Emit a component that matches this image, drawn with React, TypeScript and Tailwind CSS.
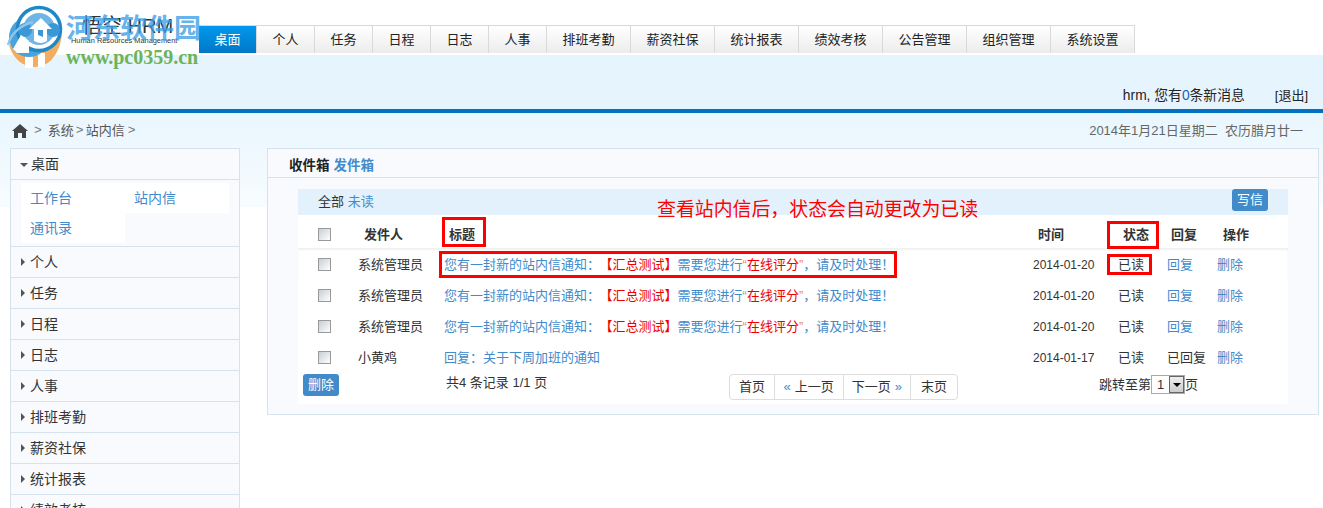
import { Fragment } from "react";

const tabs: [string, string][] = [
  ["桌面", "w-[58px]"], ["个人", "w-[58px]"], ["任务", "w-[58px]"], ["日程", "w-[58px]"], ["日志", "w-[58px]"], ["人事", "w-[58px]"],
  ["排班考勤", "w-[84px]"], ["薪资社保", "w-[84px]"], ["统计报表", "w-[84px]"], ["绩效考核", "w-[84px]"], ["公告管理", "w-[84px]"], ["组织管理", "w-[84px]"], ["系统设置", "w-[84px]"],
];

const menu = ["个人", "任务", "日程", "日志", "人事", "排班考勤", "薪资社保", "统计报表", "绩效考核"];

const rows = [
  { from: "系统管理员", date: "2014-01-20", reply: "回复" },
  { from: "系统管理员", date: "2014-01-20", reply: "回复" },
  { from: "系统管理员", date: "2014-01-20", reply: "回复" },
  { from: "小黄鸡", date: "2014-01-17", reply: "已回复" },
];

const cols = "grid grid-cols-[61px_85px_589px_85px_49px_50px_1fr] items-center";

function Check() {
  return <span className="block h-[13px] w-[13px] border border-[#999] bg-gradient-to-br from-[#c8ced4] to-white" />;
}

function Logo() {
  return (
    <svg width="60" height="64" viewBox="0 0 60 64" className="absolute left-[5px] top-[5px]">
      <path d="M4 40 C8 54 18 62 30 62 C44 62 54 50 57 30 L30 40 Z" fill="#f4ad5f" />
      <rect x="20" y="50" width="8" height="13" fill="#fff" />
      <rect x="33" y="48" width="7" height="14" fill="#fff" />
      <circle cx="24" cy="32" r="20" fill="#4aa3dc" />
      <circle cx="34" cy="24" r="22" fill="#fff" />
      <circle cx="34" cy="24" r="21.5" fill="none" stroke="#1e88c8" strokeWidth="3.5" />
      <circle cx="34" cy="24" r="16" fill="#6db5e4" />
      <circle cx="20" cy="25" r="7" fill="#3b97d6" />
      <circle cx="48" cy="25" r="7" fill="#3b97d6" />
      <path d="M29 36 L29 24 L24 24 L36 13 L47 24 L42 24 L42 36 Q36 40 29 36 Z" fill="#fff" />
      <path d="M33 30 L33 25 L38 25 L38 32 Z" fill="#3b97d6" />
      <path d="M3 40 C6 28 16 20 28 17" fill="none" stroke="#8cc6ec" strokeWidth="2.5" />
      <path d="M8 44 L16 30 L24 36 L24 48 L12 48 Z" fill="#fff" />
    </svg>
  );
}

function Header() {
  return (
    <header>
      <div className="flex h-[55px] items-start bg-white pl-[199px] pt-[25px]">
        {tabs.map(([name, width], i) => (
          <div
            key={name}
            className={`${width} flex h-[28px] items-center justify-center border-r border-t border-[#d9d9d9] text-[13px] ${
              i === 0 ? "border-[#0077c0] bg-gradient-to-b from-[#0099ee] to-[#0077c6] text-white" : "bg-gradient-to-b from-white to-[#ececec] text-[#222]"
            }`}
          >
            {name}
          </div>
        ))}
      </div>
      <div className="flex h-[54px] items-end justify-end bg-[#e6f4fe] pb-[4px] pr-[15px] leading-[18px] text-[#222]">
        <span className="text-[13.8px]">hrm, 您有<span className="text-[#1b5fb0]">0</span>条新消息</span>
        <span className="ml-[30px] text-[13px]">[退出]</span>
      </div>
      <div className="h-[4px] bg-[#0070c0]" />
    </header>
  );
}

function Sidebar() {
  return (
    <aside className="w-[230px] shrink-0 border border-[#d5e3ef] bg-[#f8fafe] text-[14px] text-[#333]">
      <div className="flex h-[31px] items-center border-b border-[#d5e3ef] pl-[9px]">
        <span className="mr-[3px] mt-[1px] h-0 w-0 border-x-[4px] border-t-[4px] border-x-transparent border-t-[#555]" />
        桌面
      </div>
      <div className="grid h-[67px] grid-cols-[104px_104px] content-start border-b border-[#d5e3ef] pl-[10px] pt-[3px] text-[#428bca]">
        <div className="flex h-[30px] items-center bg-white pl-[9px]">工作台</div>
        <div className="flex h-[30px] items-center bg-white pl-[9px]">站内信</div>
        <div className="flex h-[30px] items-center bg-white pl-[9px]">通讯录</div>
      </div>
      {menu.map((m) => (
        <div key={m} className="flex h-[31px] items-center border-b border-[#d5e3ef] pl-[10px]">
          <span className="mr-[5px] h-0 w-0 border-y-[4px] border-l-[4px] border-y-transparent border-l-[#555]" />
          {m}
        </div>
      ))}
    </aside>
  );
}

function Subject() {
  return (
    <span className="text-[13px] text-[#428bca]">
      您有一封新的站内信通知：<span className="ml-[6px] text-[#e00]">【汇总测试】</span>需要您进行<span className="text-[#f08a3c]">“</span><span className="text-[#e00]">在线评分</span><span className="text-[#f08a3c]">”</span>，请及时处理！
    </span>
  );
}

function Pager() {
  const cells = [
    ["首页", "w-[45px]"],
    ["上一页", "w-[69px]"],
    ["下一页", "w-[68px]"],
    ["末页", "w-[46px]"],
  ];
  return (
    <div className="flex h-[26px] w-[229px] rounded-[4px] border border-[#ddd] bg-white text-[13px] text-[#333]">
      {cells.map(([t, w], i) => (
        <div key={t} className={`${w} flex items-center justify-center ${i < 3 ? "border-r border-[#ddd]" : ""}`}>
          {i === 1 && <span className="mr-[4px] text-[#428bca]">«</span>}
          {t}
          {i === 2 && <span className="ml-[4px] text-[#428bca]">»</span>}
        </div>
      ))}
    </div>
  );
}

function Inbox() {
  return (
    <main className="ml-[27px] h-[267px] w-[1052px] border border-[#d5e3ef] bg-[#f8fafe]">
      <div className="flex h-[29px] items-center gap-[4px] border-b border-[#d5e3ef] pl-[21px] pt-[6px] text-[13.5px] font-bold text-[#222]">
        收件箱 <span className="text-[#428bca]">发件箱</span>
      </div>
      <div className="mx-[30px] mt-[11px] h-[215px] w-[990px] bg-white">
        <div className="flex h-[26px] items-start justify-between bg-[#e3f1fd] pl-[20px] pr-[20px] text-[13px] text-[#333]">
          <span className="pt-[4px] leading-[18px]">全部 <span className="text-[#428bca]">未读</span></span>
          <span className="flex h-[22px] w-[36px] items-center justify-center rounded-[3px] bg-[#428bca] text-[13px] text-white">写信</span>
        </div>
        <div className={`${cols} h-[33px] pt-[6px] text-[13px] font-bold text-[#333]`}>
          <span className="pl-[20px]"><Check /></span>
          <span className="pl-[5px]">发件人</span>
          <span className="pl-[5px]">标题</span>
          <span className="pl-[5px]">时间</span>
          <span className="pl-[5px]">状态</span>
          <span className="pl-[4px]">回复</span>
          <span className="pl-[6px]">操作</span>
        </div>
        {rows.map((r, i) => (
          <div key={i} className={`${cols} h-[31px] pt-[2px] text-[13px] text-[#333] ${i === 0 ? "shadow-[inset_0_2px_2px_#f0f0f0]" : ""}`}>
            <span className="pl-[20px]"><Check /></span>
            <span className="ml-[-1px]">{r.from}</span>
            {i < 3 ? <Subject /> : <span className="text-[#428bca]">回复：关于下周加班的通知</span>}
            <span className="text-[12px]">{r.date}</span>
            <span>已读</span>
            <span className={r.reply === "回复" ? "text-[#428bca]" : ""}>{r.reply}</span>
            <span className="text-[#428bca]">删除</span>
          </div>
        ))}
        <div className="mt-[-4px] flex items-start text-[13px] text-[#333]">
          <span className="ml-[5px] mt-[6px] flex h-[22px] w-[36px] items-center justify-center rounded-[3px] bg-[#428bca] text-white">删除</span>
          <span className="ml-[107px] mt-[6px] w-[283px] leading-[18px]">共4 条记录 1/1 页</span>
          <div className="mt-[6px]"><Pager /></div>
          <div className="ml-[141px] mt-[7px] flex items-center">
            跳转至第
            <span className="flex h-[19px] w-[34px] items-center justify-between border border-[#aaa] pl-[5px]">
              1
              <span className="flex h-[17px] w-[15px] items-center justify-center border border-[#666] bg-gradient-to-b from-[#eee] to-[#ccc]">
                <span className="h-0 w-0 border-x-[4px] border-t-[4px] border-x-transparent border-t-black" />
              </span>
            </span>
            页
          </div>
        </div>
      </div>
    </main>
  );
}

export default function App() {
  return (
    <div className="relative h-[508px] w-[1323px] overflow-hidden bg-white font-['Liberation_Sans','Noto_Sans_CJK_SC',sans-serif]">
      <Header />
      <div className="bg-[linear-gradient(#e9f6fe,#f7fcff_94px,#ffffff_94px)] pt-[1px]">
        <div className="flex h-[34px] items-center justify-between pl-[12px] pr-[20px] text-[13px] text-[#555]">
          <div className="flex items-center">
            <svg width="16" height="14" viewBox="0 0 16 14" fill="#444">
              <path d="M8 0 L16 7 L14 7 L14 14 L10 14 L10 9 L6 9 L6 14 L2 14 L2 7 L0 7 Z" />
            </svg>
            {["系统", "站内信"].map((b, i) => (
              <Fragment key={b}>
                <span className={i === 0 ? "mx-[6px] font-['Liberation_Mono'] text-[#777]" : "mx-[2px] font-['Liberation_Mono'] text-[#777]"}>&gt;</span>
                <span>{b}</span>
              </Fragment>
            ))}
            <span className="mx-[3px] font-['Liberation_Mono'] text-[#777]">&gt;</span>
          </div>
          <span className="text-[#666]">2014年1月21日星期二&nbsp;&nbsp;农历腊月廿一</span>
        </div>
        <div className="flex pl-[10px]">
          <Sidebar />
          <Inbox />
        </div>
      </div>

      {/* logo + watermark over the header */}
      <div className="absolute left-[82px] top-[13px] text-[20px] leading-[26px] text-[#333]">悟空 HRM</div>
      <div className="absolute left-[71px] top-[36px] text-[7.4px] leading-[10px] text-[#333]">Human Resources Management</div>
      <Logo />
      <div className="absolute left-[66px] top-[12px] text-[27px] font-bold leading-[34px] text-[#3d9fe8]/80">河东软件园</div>
      <div className="absolute left-[66px] top-[46px] font-['Liberation_Serif'] text-[20px] font-bold leading-[22px] text-[#6cb35a]">www.pc0359.cn</div>

      {/* red annotations */}
      <div className="absolute left-[657px] top-[198px] text-[18.9px] leading-[23px] text-[#f00]">查看站内信后，状态会自动更改为已读</div>
      <div className="absolute left-[442px] top-[217px] h-[30px] w-[44px] border-[3px] border-[#f00]" />
      <div className="absolute left-[439px] top-[251px] h-[27px] w-[458px] border-[3px] border-[#f00]" />
      <div className="absolute left-[1107px] top-[221px] h-[28px] w-[52px] border-[3px] border-[#f00]" />
      <div className="absolute left-[1107px] top-[254px] h-[21px] w-[45px] border-[3px] border-[#f00]" />
    </div>
  );
}
